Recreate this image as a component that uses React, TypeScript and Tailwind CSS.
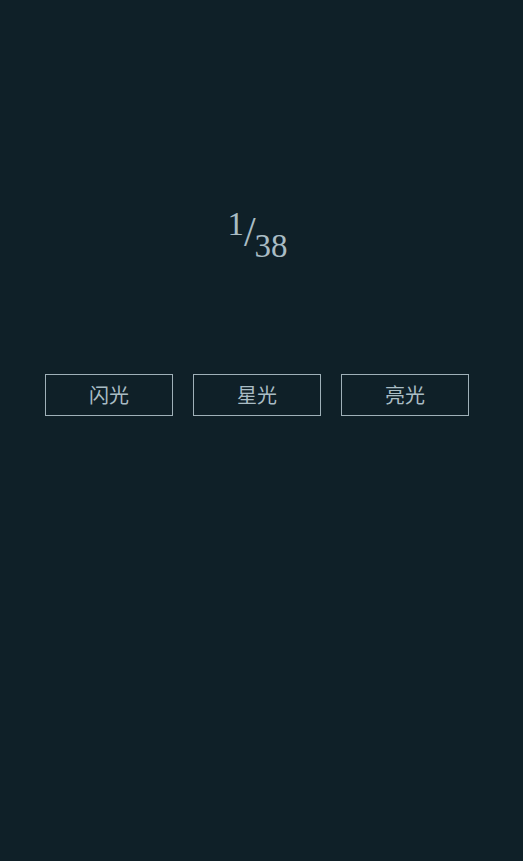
export default function App() {
  const labels = ['闪光', '星光', '亮光'];
  return (
    <div className="min-h-[861px] w-full bg-[#0f2028] text-[#a9bcc4]" style={{ fontFamily: '"Liberation Serif", "Noto Sans CJK SC", serif' }}>
      <div className="pt-[205px] flex justify-center pr-[8px]">
        <div className="flex h-[41px] items-start text-[33px] leading-none">
          <span className="relative top-[3px]">1</span>
          <span className="relative top-[6px] text-[42px]">/</span>
          <span className="relative top-[25px] -ml-[1px]">38</span>
        </div>
      </div>
      <div className="mt-[128px] flex gap-5 pl-[45px]">
        {labels.map((l) => (
          <button
            key={l}
            className="h-[42px] w-[128px] border border-[#9fb0b8] text-[20px] text-[#a9bcc4]"
            style={{ fontFamily: '"Noto Sans CJK SC", sans-serif' }}
          >
            {l}
          </button>
        ))}
      </div>
    </div>
  );
}
